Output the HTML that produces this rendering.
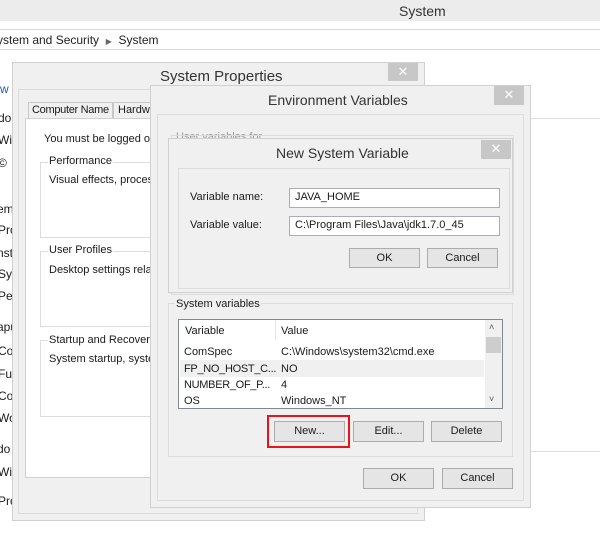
<!DOCTYPE html>
<html><head><meta charset="utf-8"><style>
*{margin:0;padding:0;box-sizing:border-box}
body{width:600px;height:547px;background:#fff;position:relative;overflow:hidden;font-family:"Liberation Sans",sans-serif;font-size:11px;color:#1a1a1a}
.a{position:absolute}
.t{position:absolute;white-space:nowrap}
.btn{position:absolute;background:#e5e5e5;border:1px solid #acacac;text-align:center;line-height:18px;font-size:11px}
.x{position:absolute;background:#c7c7c7;color:#fff;text-align:center;font-size:13px;line-height:18px}
.win{position:absolute;background:#f0f0f0;border:1px solid #d0d0d0}
.gb{position:absolute;border:1px solid #dcdcdc}
.in{position:absolute;background:#fff;border:1px solid #abadb3;padding-left:5px;line-height:17px}
</style></head><body>
<div class="a" style="left:0;top:0;width:600px;height:21px;background:#ececec"></div>
<div class="t" style="left:399px;top:3px;font-size:14px;color:#333">System</div>
<div class="a" style="left:0;top:29px;width:600px;height:1px;background:#d8d8d8"></div>
<div class="a" style="left:0;top:49px;width:600px;height:1px;background:#d8d8d8"></div>
<div class="t" style="left:-3px;top:33px;font-size:12px;color:#222">ystem and Security &nbsp;<span style="font-size:8px;color:#666">▶</span>&nbsp; System</div>
<div class="a" style="left:530px;top:118px;width:70px;height:1px;background:#ddd"></div>
<div class="a" style="left:530px;top:451px;width:70px;height:1px;background:#ddd"></div>
<div class="t" style="left:0;top:82px;font-size:12px;color:#1e5bb8">w</div>
<div class="t" style="left:-2px;top:111px;font-size:12px">do</div>
<div class="t" style="left:-2px;top:133px;font-size:12px">Wi</div>
<div class="t" style="left:-2px;top:156px;font-size:12px">©</div>
<div class="t" style="left:-3px;top:202px;font-size:12px">em</div>
<div class="t" style="left:-2px;top:223px;font-size:12px">Pro</div>
<div class="t" style="left:-3px;top:246px;font-size:12px">nst</div>
<div class="t" style="left:-2px;top:267px;font-size:12px">Sys</div>
<div class="t" style="left:-2px;top:289px;font-size:12px">Per</div>
<div class="t" style="left:-3px;top:320px;font-size:12px">apu</div>
<div class="t" style="left:-2px;top:344px;font-size:12px">Co</div>
<div class="t" style="left:-2px;top:367px;font-size:12px">Ful</div>
<div class="t" style="left:-2px;top:389px;font-size:12px">Co</div>
<div class="t" style="left:-2px;top:411px;font-size:12px">Wo</div>
<div class="t" style="left:-3px;top:442px;font-size:12px">do</div>
<div class="t" style="left:-2px;top:465px;font-size:12px">Wi</div>
<div class="t" style="left:-2px;top:494px;font-size:12px">Pro</div>

<div class="win" style="left:12px;top:62px;width:413px;height:459px"></div>
<div class="t" style="left:160px;top:68px;font-size:15px;color:#333">System Properties</div>
<div class="x" style="left:388px;top:63px;width:30px;height:18px">✕</div>
<div class="a" style="left:18px;top:89px;width:400px;height:425px;border:1px solid #dadada"></div>
<div class="a" style="left:28px;top:102px;width:85px;height:17px;border:1px solid #c8c8c8;border-bottom:none;background:#f0f0f0"></div>
<div class="t" style="left:32px;top:104px;font-size:11px;letter-spacing:-0.3px">Computer Name</div>
<div class="a" style="left:113px;top:102px;width:40px;height:17px;border:1px solid #c8c8c8;border-bottom:none"></div>
<div class="t" style="left:118px;top:104px;font-size:11px">Hardwa</div>
<div class="a" style="left:25px;top:118px;width:140px;height:360px;background:#fff;border:1px solid #d0d0d0"></div>
<div class="t" style="left:44px;top:133px">You must be logged on</div>
<div class="gb" style="left:40px;top:162px;width:130px;height:76px"></div>
<div class="t" style="left:48px;top:155px;background:#fff;padding:0 1px">Performance</div>
<div class="t" style="left:49px;top:174px">Visual effects, process</div>
<div class="gb" style="left:40px;top:251px;width:130px;height:76px"></div>
<div class="t" style="left:48px;top:244px;background:#fff;padding:0 1px">User Profiles</div>
<div class="t" style="left:49px;top:264px">Desktop settings relat</div>
<div class="gb" style="left:40px;top:340px;width:130px;height:77px"></div>
<div class="t" style="left:48px;top:334px;background:#fff;padding:0 1px">Startup and Recovery</div>
<div class="t" style="left:49px;top:353px">System startup, systen</div>

<div class="win" style="left:150px;top:85px;width:381px;height:423px"></div>
<div class="t" style="left:268px;top:92px;font-size:14px;color:#333">Environment Variables</div>
<div class="x" style="left:494px;top:86px;width:30px;height:19px">✕</div>
<div class="a" style="left:157px;top:114px;width:367px;height:387px;border:1px solid #dcdcdc"></div>
<div class="t" style="left:176px;top:131px;color:#999">User variables for ...</div>
<div class="gb" style="left:168px;top:303px;width:345px;height:154px"></div>
<div class="t" style="left:175px;top:298px;background:#f0f0f0;padding:0 1px">System variables</div>
<div class="a" style="left:178px;top:319px;width:325px;height:90px;background:#fff;border:1px solid #828790"></div>
<div class="a" style="left:275px;top:320px;width:1px;height:20px;background:#e5e5e5"></div>
<div class="t" style="left:185px;top:325px">Variable</div>
<div class="t" style="left:281px;top:325px">Value</div>
<div class="a" style="left:180px;top:360px;width:304px;height:17px;background:#f0f0f0"></div>
<div class="t" style="left:184px;top:346px">ComSpec</div><div class="t" style="left:281px;top:346px">C:\Windows\system32\cmd.exe</div>
<div class="t" style="left:184px;top:363px;letter-spacing:-0.3px">FP_NO_HOST_C...</div><div class="t" style="left:281px;top:363px">NO</div>
<div class="t" style="left:184px;top:379px;letter-spacing:-0.3px">NUMBER_OF_P...</div><div class="t" style="left:281px;top:379px">4</div>
<div class="t" style="left:184px;top:395px">OS</div><div class="t" style="left:281px;top:395px">Windows_NT</div>
<div class="a" style="left:485px;top:320px;width:17px;height:88px;background:#f0f0f0"></div>
<div class="t" style="left:489px;top:322px;font-size:9px;color:#555">˄</div>
<div class="a" style="left:486px;top:337px;width:15px;height:16px;background:#cdcdcd"></div>
<div class="t" style="left:489px;top:394px;font-size:9px;color:#555">˅</div>
<div class="a" style="left:267px;top:415px;width:83px;height:33px;border:2px solid #e8141c"></div>
<div class="btn" style="left:274px;top:421px;width:71px;height:21px">New...</div>
<div class="btn" style="left:353px;top:421px;width:71px;height:21px">Edit...</div>
<div class="btn" style="left:431px;top:421px;width:71px;height:21px">Delete</div>
<div class="btn" style="left:363px;top:468px;width:71px;height:21px">OK</div>
<div class="btn" style="left:442px;top:468px;width:71px;height:21px">Cancel</div>

<div class="a" style="left:171px;top:135px;width:343px;height:160px;border:1px solid #dcdcdc"></div>
<div class="win" style="left:168px;top:138px;width:345px;height:155px"></div>
<div class="t" style="left:276px;top:145px;font-size:14px;color:#333">New System Variable</div>
<div class="x" style="left:481px;top:140px;width:30px;height:19px">✕</div>
<div class="a" style="left:178px;top:168px;width:332px;height:121px;border:1px solid #dcdcdc"></div>
<div class="t" style="left:190px;top:191px">Variable name:</div>
<div class="t" style="left:190px;top:219px">Variable value:</div>
<div class="in" style="left:289px;top:188px;width:211px;height:20px">JAVA_HOME</div>
<div class="in" style="left:289px;top:216px;width:211px;height:20px">C:\Program Files\Java\jdk1.7.0_45</div>
<div class="btn" style="left:349px;top:248px;width:71px;height:20px">OK</div>
<div class="btn" style="left:427px;top:248px;width:71px;height:20px">Cancel</div>
</body></html>
